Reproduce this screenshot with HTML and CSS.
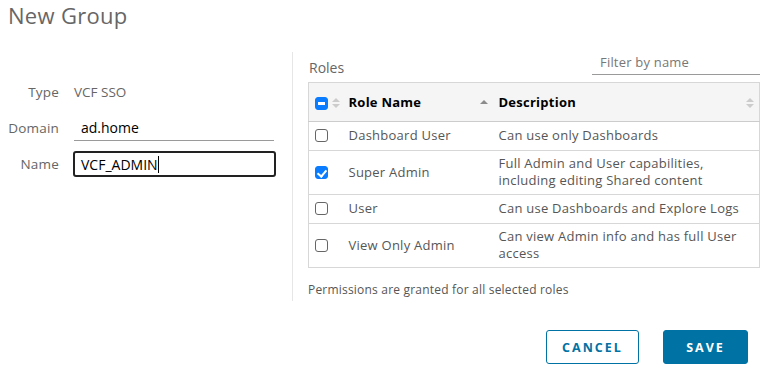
FILE: index.html
```html
<!DOCTYPE html>
<html lang="en">
<head>
    <meta charset="UTF-8">
    <meta name="viewport" content="width=device-width, initial-scale=1.0">
    <title>New Group</title>
    <link rel="stylesheet" href="styles.css">
</head>
<body>

    <h1 class="title">New Group</h1>

    <div class="dialog-body">
        <div class="form-col">
            <div class="form-row">
                <label>Type</label>
                <span class="static-value">VCF SSO</span>
            </div>
            <div class="form-row">
                <label for="domain">Domain</label>
                <input type="text" id="domain" class="line-input" value="ad.home">
            </div>
            <div class="form-row">
                <label for="name">Name</label>
                <div class="box-input"><span>VCF_ADMIN</span><span class="caret"></span></div>
            </div>
        </div>

        <div class="roles-col">
            <div class="roles-head">
                <span class="roles-title">Roles</span>
                <div class="filter">Filter by name</div>
            </div>

            <table class="grid">
                <thead>
                    <tr>
                        <th class="col-check">
                            <span class="cb cb-partial"></span>
                            <span class="sort sort-both"></span>
                        </th>
                        <th class="col-role">
                            Role Name
                            <span class="sort sort-up"></span>
                        </th>
                        <th class="col-desc">
                            Description
                            <span class="sort sort-both"></span>
                        </th>
                    </tr>
                </thead>
                <tbody>
                    <tr>
                        <td class="col-check"><span class="cb"></span></td>
                        <td>Dashboard User</td>
                        <td>Can use only Dashboards</td>
                    </tr>
                    <tr>
                        <td class="col-check"><span class="cb cb-checked"></span></td>
                        <td>Super Admin</td>
                        <td>Full Admin and User capabilities,<br>including editing Shared content</td>
                    </tr>
                    <tr>
                        <td class="col-check"><span class="cb"></span></td>
                        <td>User</td>
                        <td>Can use Dashboards and Explore Logs</td>
                    </tr>
                    <tr>
                        <td class="col-check"><span class="cb"></span></td>
                        <td>View Only Admin</td>
                        <td>Can view Admin info and has full User<br>access</td>
                    </tr>
                </tbody>
            </table>

            <p class="note">Permissions are granted for all selected roles</p>
        </div>
    </div>

    <div class="footer">
        <button class="btn btn-outline">CANCEL</button>
        <button class="btn btn-primary">SAVE</button>
    </div>

</body>
</html>
```

FILE: styles.css
```css
* {
    box-sizing: border-box;
    font-family: 'Open Sans', 'Noto Sans', sans-serif;
}

body {
    margin: 0;
    padding: 0 8px;
    background: #fff;
    color: #565656;
    font-size: 13px;
    width: 768px;
    height: 375px;
    overflow: hidden;
}

.title {
    margin: 0;
    padding-top: 1px;
    font-size: 22px;
    font-weight: 400;
    letter-spacing: 0.3px;
    color: #666;
    line-height: 28px;
}

.dialog-body {
    display: flex;
    margin-top: 23px;
}

.form-col {
    width: 285px;
    height: 249px;
    border-right: 1px solid #e6e6e6;
    padding-top: 28px;
}

.form-row {
    display: grid;
    grid-template-columns: 51px 1fr;
    column-gap: 15px;
    align-items: center;
    margin-bottom: 10px;
}

.form-row label {
    text-align: right;
    color: #666;
    font-size: 13.5px;
    letter-spacing: 0.2px;
}

.static-value {
    color: #666;
    line-height: 24px;
    font-size: 13.5px;
}

.line-input {
    width: 200px;
    border: none;
    border-bottom: 1px solid #9a9a9a;
    padding: 4px 7px 4px 7px;
    font-size: 14px;
    color: #000;
    outline: none;
    height: 27px;
}

.box-input {
    width: 203px;
    height: 26px;
    margin-left: -1px;
    border: 2px solid #222;
    border-radius: 3px;
    padding: 0 6px;
    font-size: 14px;
    color: #000;
    display: flex;
    align-items: center;
}

.caret {
    display: inline-block;
    width: 1px;
    height: 17px;
    background: #000;
}

.roles-col {
    flex: 1;
    padding-left: 15px;
}

.roles-head {
    display: flex;
    justify-content: space-between;
    align-items: flex-end;
    height: 31px;
    margin-top: -3px;
    padding-bottom: 3px;
}

.roles-title {
    font-size: 14px;
    color: #666;
    padding-left: 1px;
}

.filter {
    width: 168px;
    border-bottom: 1px solid #9a9a9a;
    padding: 0 8px 3px;
    color: #777;
    font-size: 13px;
    letter-spacing: 0.2px;
    margin-bottom: 2px;
}

.grid {
    width: 100%;
    border-collapse: collapse;
    border: 1px solid #d7d7d7;
    margin-top: 2px;
    letter-spacing: 0.25px;
}

.grid th {
    background: #f5f5f5;
    text-align: left;
    font-weight: 700;
    color: #000;
    font-size: 13px;
    height: 39px;
    padding: 0 8px;
    position: relative;
    border-bottom: 1px solid #ccc;
}

.grid td {
    height: 29px;
    padding: 4px 8px 5px;
    line-height: 17px;
    border-top: 1px solid #d7d7d7;
    vertical-align: middle;
}

.grid .col-check {
    width: 32px;
    padding: 0 0 0 6px;
}

.grid td.col-check {
    vertical-align: middle;
    padding-bottom: 3px;
}

.col-role {
    width: 150px;
}

.cb {
    display: inline-block;
    width: 13px;
    height: 13px;
    border: 1px solid #666;
    border-radius: 3px;
    vertical-align: middle;
    position: relative;
}

.cb-partial,
.cb-checked {
    background: #0a7cff;
    border-color: #0a7cff;
}

.cb-partial::after {
    content: "";
    position: absolute;
    left: 2px;
    top: 4px;
    width: 7px;
    height: 3px;
    background: #fff;
}

.cb-checked::after {
    content: "";
    position: absolute;
    left: 3px;
    top: 1px;
    width: 4px;
    height: 7px;
    border: solid #fff;
    border-width: 0 2px 2px 0;
    transform: rotate(40deg);
}

.sort {
    position: absolute;
    top: 50%;
    width: 7px;
    height: 10px;
    margin-top: -4px;
}

.sort::before,
.sort::after {
    content: "";
    position: absolute;
    left: 0;
    border-left: 4px solid transparent;
    border-right: 4px solid transparent;
}

.sort-both::before {
    top: 0;
    border-bottom: 4px solid #ccc;
}

.sort-both::after {
    top: 6px;
    border-top: 4px solid #ccc;
}

.sort-up::before {
    top: 2px;
    border-bottom: 4px solid #8c8c8c;
}

.col-check .sort {
    left: 23px;
}

.col-role .sort {
    right: 4px;
}

.col-desc .sort {
    right: 6px;
}

.note {
    margin: 13px 0 0;
    font-size: 12px;
    letter-spacing: 0.2px;
    color: #565656;
}

.footer {
    display: flex;
    justify-content: flex-end;
    gap: 24px;
    padding-right: 12px;
    margin-top: 29px;
}

.btn {
    height: 34px;
    border-radius: 3px;
    font-size: 12.5px;
    font-weight: 700;
    letter-spacing: 2px;
    cursor: pointer;
}

.btn-outline {
    width: 93px;
    background: #fff;
    color: #0072a3;
    border: 1px solid #0072a3;
}

.btn-primary {
    width: 85px;
    background: #0072a3;
    color: #fff;
    border: 1px solid #0072a3;
}
```
